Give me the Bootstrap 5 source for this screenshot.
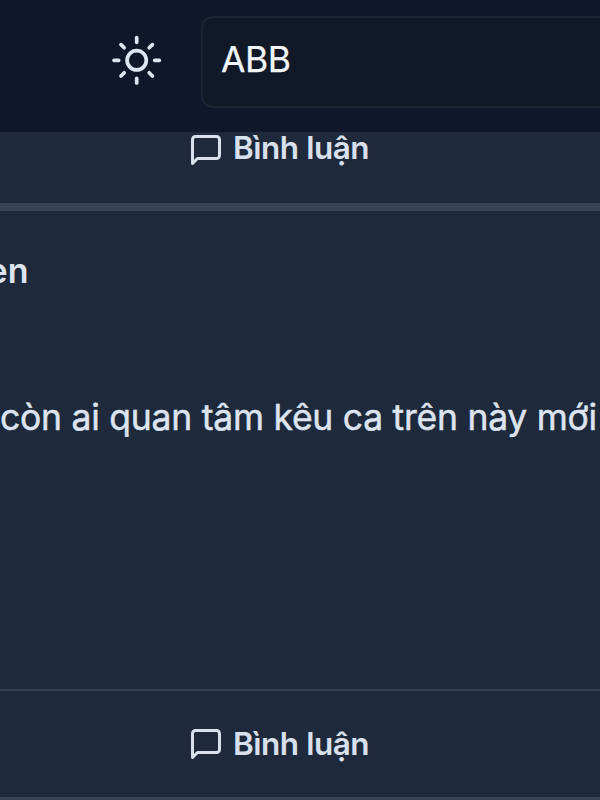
<!DOCTYPE html>
<html lang="vi" data-bs-theme="dark">
<head>
<meta charset="utf-8">
<meta name="viewport" content="width=device-width, initial-scale=1">
<title>ABB</title>
<link href="https://cdn.jsdelivr.net/npm/bootstrap@5.3.0/dist/css/bootstrap.min.css" rel="stylesheet">
<style>
body{font-family:Inter,"Noto Sans",sans-serif;background:#1e293b;color:#dde4ef;height:800px}
.topbar{height:132px;background:#0f172a;padding-left:111px}
.theme-btn{width:51px;height:51px;margin-top:35px;color:#dde4f2}
.search-box{height:92px;margin:16px -20px 0 39px;padding:0 18px 4px;background:#111827;border:2px solid #1d2435;border-radius:12px;font-size:35.5px;line-height:1;color:#f1f5f9;letter-spacing:-.5px;-webkit-text-stroke:.25px currentColor}
.comment-btn{font-size:31.5px;font-weight:600;letter-spacing:-.47px;line-height:38px;padding-left:188px;color:#d8e0ed;gap:9px}
.comment-btn svg{flex:none}
.prev-actions{height:71px}
.prev-actions span{margin-top:-3px}
.post{height:597px;border-top:8px solid #374357}
.author{height:60px;margin-top:30px;font-size:34px;font-weight:600;line-height:60px;width:28.5px}
.message{margin-top:87px;font-size:35.5px;line-height:60px;letter-spacing:-.25px;-webkit-text-stroke:.5px currentColor}
.post-actions{height:111px;border-top:2px solid #334155;border-bottom:3px solid #374357}
</style>
<script src="https://cdn.jsdelivr.net/npm/bootstrap@5.3.0/dist/js/bootstrap.bundle.min.js"></script>
</head>
<body class="overflow-hidden d-flex flex-column">
<header class="topbar d-flex align-items-start flex-shrink-0">
  <button class="theme-btn btn p-0 border-0 d-flex flex-shrink-0" type="button" aria-label="Theme">
    <svg width="51" height="51" viewBox="-25.7 -25.3 51 51" fill="none" stroke="currentColor" stroke-width="3.7" stroke-linecap="round"><circle r="9.6"/><path d="M0-22.7V-18M0 22.7V18M-22.7 0H-18M22.7 0H18M-15.7-15.7L-12.5-12.5M15.7-15.7L12.5-12.5M-15.7 15.7L-12.5 12.5M15.7 15.7L12.5 12.5"/></svg>
  </button>
  <div class="search-box d-flex align-items-center flex-grow-1">ABB</div>
</header>
<main class="d-flex flex-column flex-grow-1">
  <div class="prev-actions flex-shrink-0">
    <div class="comment-btn d-flex align-items-start"><svg width="36" height="36" viewBox="0 0 24 24" fill="none" stroke="currentColor" stroke-width="2" stroke-linecap="round" stroke-linejoin="round"><path d="M21 15.7a2 2 0 0 1-2 2H6.3L3 21V5a2 2 0 0 1 2-2h14a2 2 0 0 1 2 2z"/></svg><span>Bình luận</span></div>
  </div>
  <article class="post d-flex flex-column">
    <div class="author d-flex justify-content-end">en</div>
    <div class="message text-nowrap">còn ai quan tâm kêu ca trên này mới</div>
    <div class="post-actions comment-btn d-flex align-items-center mt-auto"><svg width="36" height="36" viewBox="0 0 24 24" fill="none" stroke="currentColor" stroke-width="2" stroke-linecap="round" stroke-linejoin="round"><path d="M21 15.7a2 2 0 0 1-2 2H6.3L3 21V5a2 2 0 0 1 2-2h14a2 2 0 0 1 2 2z"/></svg><span>Bình luận</span></div>
  </article>
</main>
</body>
</html>
